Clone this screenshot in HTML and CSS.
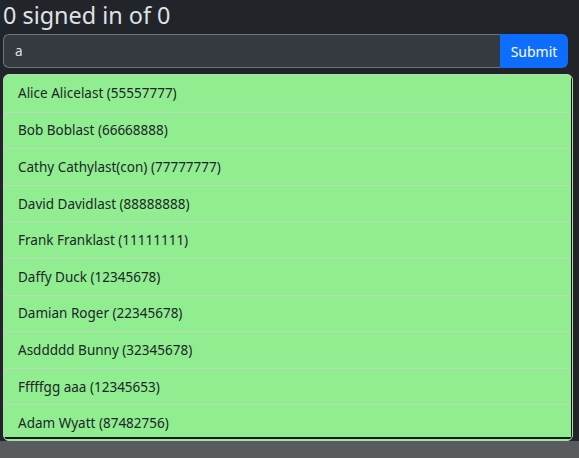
FILE: index.html
```html
<!DOCTYPE html>
<html lang="en">
<head>
<meta charset="utf-8">
<title>Sign in</title>
<link rel="stylesheet" href="styles.css">
</head>
<body>
<div class="page">
  <h1 class="title">0 signed in of 0</h1>
  <form class="input-group">
    <input class="search" type="text" value="a">
    <button class="submit" type="button">Submit</button>
  </form>
  <div class="list-wrap">
    <ul class="list">
      <li class="item">Alice Alicelast (55557777)</li>
      <li class="item">Bob Boblast (66668888)</li>
      <li class="item">Cathy Cathylast(con) (77777777)</li>
      <li class="item">David Davidlast (88888888)</li>
      <li class="item">Frank Franklast (11111111)</li>
      <li class="item">Daffy Duck (12345678)</li>
      <li class="item">Damian Roger (22345678)</li>
      <li class="item">Asddddd Bunny (32345678)</li>
      <li class="item">Fffffgg aaa (12345653)</li>
      <li class="item">Adam Wyatt (87482756)</li>
    </ul>
  </div>
</div>
</body>
</html>
```
FILE: styles.css
```css
html {
  background: #595c5f;
}
body {
  margin: 0;
  background: #212529;
  height: 441px;
  font-family: "Noto Sans", "Open Sans", sans-serif;
  color: #dee2e6;
}
.page {
  padding: 0 6px 0 3px;
}
.title {
  margin: 0 0 4px;
  padding-top: 1px;
  font-size: 23.4px;
  line-height: 29px;
  font-weight: 400;
  color: #dee2e6;
}
.input-group {
  display: flex;
  height: 34px;
  margin: 0 5px 6px 0;
}
.search {
  flex: 1;
  min-width: 0;
  box-sizing: border-box;
  height: 34px;
  margin: 0;
  padding: 0 11px;
  background: #343a40;
  border: 1px solid #6c757d;
  border-right: none;
  border-radius: 6px 0 0 6px;
  color: #dee2e6;
  font-family: inherit;
  font-size: 13.5px;
  outline: none;
}
.submit {
  width: 68px;
  height: 34px;
  margin: 0;
  padding: 0;
  background: #0d6efd;
  border: none;
  border-radius: 0 6px 6px 0;
  color: #fff;
  font-family: inherit;
  font-size: 14px;
}
.list-wrap {
  height: 367px;
  box-sizing: border-box;
  background: #90ee90;
  border: 1px solid #b5d9b5;
  border-radius: 6px;
  padding-bottom: 3px;
  overflow: hidden;
}
.list {
  list-style: none;
  margin: 0;
  padding: 0;
  height: 362px;
  overflow: hidden;
  border-right: 1px solid #111;
  border-bottom: 2px solid #161a1d;
}
.item {
  box-sizing: border-box;
  height: 36.6px;
  display: flex;
  align-items: center;
  padding-left: 14px;
  border-top: 1px solid #b8dcb8;
  font-size: 13.5px;
  color: #212529;
}
.item:first-child {
  border-top: none;
}
```
